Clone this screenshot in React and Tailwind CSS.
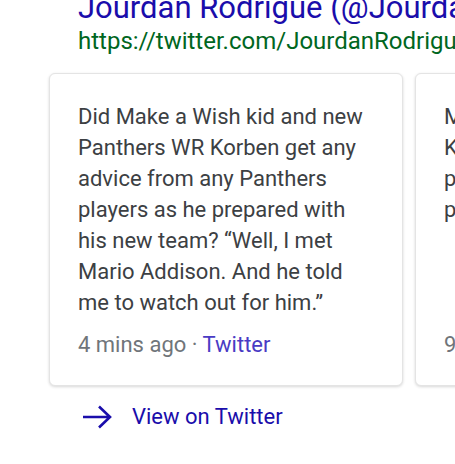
import React from "react";

const tweets = [
  {
    lines: null,
    text: "Did Make a Wish kid and new Panthers WR Korben get any advice from any Panthers players as he prepared with his new team? \u201cWell, I met Mario Addison. And he told me to watch out for him.\u201d",
    time: "4 mins ago",
  },
  {
    lines: [
      "McCaffrey also showed him",
      "Kuechly's old locker and a",
      "pair of signed gloves from",
      "practice.",
    ],
    time: "9 mins ago",
  },
];

const App = () => {
  return (
    <div
      className="w-[455px] h-[464px] overflow-hidden bg-white"
      style={{ fontFamily: "Roboto, Arial, sans-serif" }}
    >
      <div className="pl-[78px] -mt-[10px]">
        <div className="text-[31px] leading-[36px] text-[#1a0dab] whitespace-nowrap">
          Jourdan Rodrigue (@JourdanRodrigue) · Twitter
        </div>
        <div className="text-[24px] leading-[30px] text-[#006621] whitespace-nowrap">
          https://twitter.com/JourdanRodrigue
        </div>
      </div>

      {/* Carousel */}
      <div className="flex gap-3 pl-[49px] mt-[17px] pb-2">
        {tweets.map((t, i) => (
          <div
            key={i}
            className="shrink-0 w-[354px] h-[313px] bg-white rounded-md border border-[#e4e4e4] shadow-[0_1px_3px_rgba(0,0,0,0.16)] pl-[28px] pr-[32px] pt-[27px] flex flex-col"
          >
            <p className="text-[22px] leading-[31px] text-[#3c4043] flex-1">
              {t.lines
                ? t.lines.map((l, j) => <span key={j} className="block whitespace-nowrap">{l}</span>)
                : t.text}
            </p>
            <div className="text-[22px] leading-[31px] pb-[25px]">
              <span className="text-[#70757a]">{t.time} · </span>
              <span className="text-[#4a3bc4]">Twitter</span>
            </div>
          </div>
        ))}
      </div>

      <div className="flex items-center pl-[82px] mt-[8px] gap-[20px]">
        <svg width="30" height="24" viewBox="0 0 30 24" fill="none">
          <path
            d="M1 12h27M17 1.5l11 10.5-11 10.5"
            stroke="#1a0dab"
            strokeWidth="2.6"
          />
        </svg>
        <span className="text-[22px] leading-[30px] text-[#1a0dab]">View on Twitter</span>
      </div>
    </div>
  );
};

export default App;
